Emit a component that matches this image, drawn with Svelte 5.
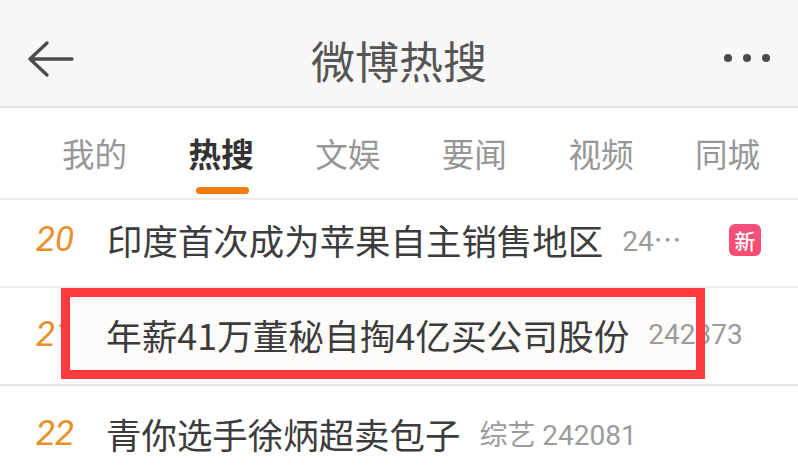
<script>
    const tabs = ['我的', '热搜', '文娱', '要闻', '视频', '同城'];
    const rows = [
        { rank: 20, title: '印度首次成为苹果自主销售地区', meta: '24⋯', isNew: true },
        { rank: 21, title: '年薪41万董秘自掏4亿买公司股份', meta: '242373', marked: true },
        { rank: 22, title: '青你选手徐炳超卖包子', meta: '综艺 242081' }
    ];
</script>

<div class="page">
    <header>
        <svg class="back" width="48" height="38" viewBox="0 0 48 38" fill="none">
            <path d="M20 3 L3 19 L20 35 M3 19 H45" stroke="#4c4c4c" stroke-width="3.4" stroke-linecap="round" stroke-linejoin="round" />
        </svg>
        <h1>微博热搜</h1>
        <div class="dots"><i></i><i></i><i></i></div>
    </header>

    <nav>
        {#each tabs as tab, i}
            <div class="tab" class:active={i === 1}>{tab}</div>
        {/each}
    </nav>

    <ul>
        {#each rows as row}
            <li class:marked={row.marked}>
                <span class="rank">{row.rank}</span>
                <span class="title">{row.title}</span>
                <span class="meta">{row.meta}</span>
                {#if row.isNew}
                    <span class="badge">新</span>
                {/if}
                {#if row.marked}
                    <div class="redbox"></div>
                {/if}
            </li>
        {/each}
    </ul>
</div>

<style>
    :global(body) {
        margin: 0;
        background: #fff;
    }
    .page {
        width: 798px;
        height: 470px;
        overflow: hidden;
        font-family: 'Noto Sans CJK SC', 'Noto Sans', sans-serif;
    }
    header {
        height: 106px;
        background: #f7f7f7;
        border-bottom: 2px solid #e2e2e2;
        display: flex;
        align-items: center;
        justify-content: space-between;
        padding: 0 28px 0 27px;
        position: relative;
    }
    .back {
        margin-top: 11px;
    }
    h1 {
        position: absolute;
        left: 311px;
        top: 28px;
        margin: 0;
        font-size: 44px;
        line-height: 64px;
        font-weight: 400;
        color: #555;
    }
    .dots {
        display: flex;
        gap: 11px;
        margin-top: 10px;
    }
    .dots i {
        width: 8px;
        height: 8px;
        border-radius: 50%;
        background: #4c4c4c;
    }
    nav {
        height: 90px;
        display: flex;
        padding-left: 62px;
        gap: 62.6px;
        border-bottom: 2px solid #ececec;
    }
    .tab {
        position: relative;
        font-size: 32.6px;
        line-height: 89px;
        color: #979797;
        width: 64px;
        white-space: nowrap;
    }
    .tab.active {
        color: #333;
        font-weight: 700;
    }
    .tab.active::after {
        content: '';
        position: absolute;
        left: 7px;
        top: 79px;
        width: 53px;
        height: 7px;
        border-radius: 4px;
        background: #f57c0a;
    }
    ul {
        margin: 0;
        padding: 0;
        list-style: none;
    }
    li {
        position: relative;
        height: 94px;
        display: flex;
        align-items: center;
        border-bottom: 2px solid #e6e6e6;
        padding-left: 36px;
        padding-bottom: 4px;
        box-sizing: content-box;
    }
    li:first-child {
        height: 78px;
        padding-bottom: 8px;
        border-bottom-color: #f0f0f0;
    }
    li.marked {
        height: 93px;
        padding-bottom: 3px;
    }
    li.marked::before {
        content: '';
        position: absolute;
        left: 61px;
        top: 0;
        width: 644px;
        height: 91px;
        background: #fdfbf9;
        z-index: -1;
    }
    .rank {
        width: 71px;
        font-family: Roboto, sans-serif;
        font-style: italic;
        font-size: 35px;
        color: #e88f2b;
        flex: none;
    }
    .title {
        font-size: 35.45px;
        color: #3c3c3c;
        white-space: nowrap;
    }
    li.marked .title {
        font-size: 35.7px;
        margin-left: -1px;
    }
    li:last-child .title {
        margin-left: -1px;
    }
    .meta {
        font-family: Roboto, 'Noto Sans CJK SC', sans-serif;
        font-size: 28px;
        color: #9b9b9b;
        margin-left: 19px;
        white-space: nowrap;
    }
    .badge {
        position: absolute;
        left: 729px;
        top: 24px;
        width: 32px;
        height: 32px;
        border-radius: 6px;
        background: linear-gradient(#f0517c, #fb4a70);
        color: #fff;
        font-size: 21px;
        line-height: 32px;
        text-align: center;
        font-weight: 500;
    }
    .redbox {
        position: absolute;
        left: 61px;
        top: 0;
        width: 644px;
        height: 91px;
        box-sizing: border-box;
        border: 9px solid #fe3a3f;
        pointer-events: none;
    }
</style>
